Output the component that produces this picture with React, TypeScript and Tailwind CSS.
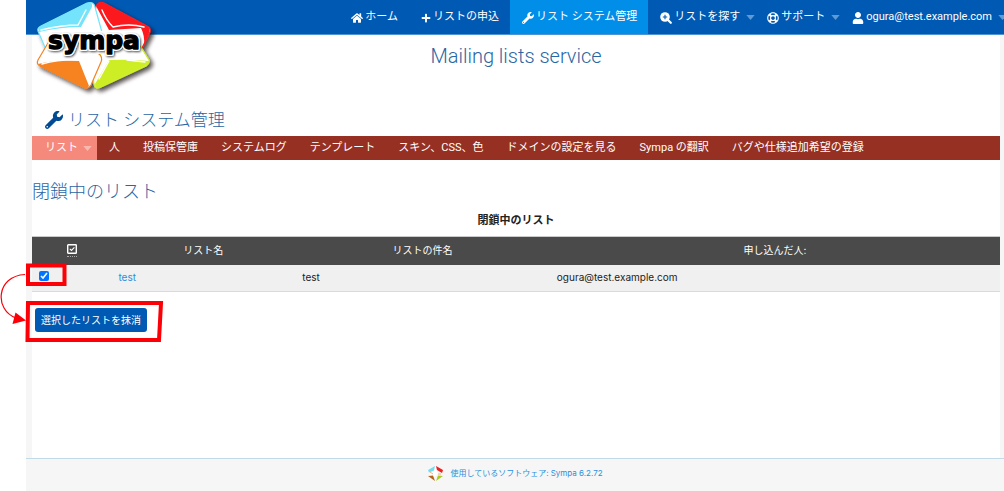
import type { ReactNode } from "react";
import { FaHome, FaPlus, FaWrench, FaRegLifeRing, FaUser } from "react-icons/fa";

const jp = "font-['Roboto','Noto_Sans_CJK_JP',sans-serif]";
const inter = "font-['Inter','Noto_Sans_CJK_JP',sans-serif]";
const heading = "font-['Roboto','Noto_Sans_CJK_JP',sans-serif] font-light text-[#2a66a4]";

function Caret({ className }: { className: string }) {
  return (
    <svg viewBox="0 0 10 6" className={`h-[5px] w-[9px] shrink-0 ${className}`} aria-hidden="true">
      <path d="M0 0h10L5 6z" fill="currentColor" />
    </svg>
  );
}

function ZoomIcon() {
  return (
    <svg viewBox="0 0 12 12" className="size-3" aria-hidden="true">
      <circle cx="5" cy="5" r="4.8" fill="#fff" />
      <path d="M8 8L10.800 10.800" stroke="#fff" strokeWidth="2.2" strokeLinecap="round" />
      <path d="M5 2.800V7.200M2.800 5H7.200" stroke="#0059b2" strokeWidth="1.1" />
    </svg>
  );
}

function Logo() {
  const word = "font-['DejaVu_Sans',sans-serif] text-[25px] font-bold";
  return (
    <svg viewBox="0 0 126 98" className="h-[98px] w-[126px]" role="img" aria-label="sympa">
      <defs>
        <filter id="shadow" x="-10%" y="-10%" width="130%" height="130%">
          <feDropShadow dx="3" dy="3" stdDeviation="2" floodColor="#1a0a14" floodOpacity="0.75" />
        </filter>
        <filter id="wordShadow" x="-10%" y="-20%" width="120%" height="150%">
          <feDropShadow dx="1" dy="1" stdDeviation="0.8" floodColor="#000" floodOpacity="0.7" />
        </filter>
      </defs>
      <g filter="url(#shadow)" fill="#fff" strokeWidth="1.2" strokeLinejoin="round">
        <path d="M64 6Q67 1 72 3L115 26Q119 28 118 32L110 48L68 56L60 30Z" stroke="#fb1b20" />
        <path d="M66 56L84 40L107 44L117 60Q118 63 114 66L69 87Q63 90 62 84L61 76Z" stroke="#cdee24" />
        <path d="M55 3Q62 1 63 7L71 36L66 52L15 52L6 31Q5 28 9 26Z" stroke="#73e4fb" />
        <path d="M16 43L54 46L67 54Q71 57 69 62L59 85Q56 90 51 87L8 66Q4 64 6 60Z" stroke="#f68220" />
      </g>
      <path d="M16 36L62 30L110 36L107 52L66 54L18 52Z" fill="#fff" />
      <path d="M7 31Q5 28 9 26L55 3Q61 1 60 7L49 27Q29 27 7 32Z" fill="#73e4fb" />
      <path d="M64 6Q67 1 72 3L115 26Q119 29 117 33L112 45Q113 36 109 28L77 30Z" fill="#fc191e" />
      <path d="M6 64Q25 59 47 61L57 86Q55 90 50 87L9 67Z" fill="#f68220" />
      <path d="M117 61Q118 64 113 66L69 87Q63 90 63 84L77 60Q98 59 117 61Z" fill="#cdee24" />
      <g stroke="#fff" strokeWidth="1.4" strokeLinecap="round" fill="none">
        <path d="M9 30Q30 25 46 25L54 10" />
        <path d="M70 10Q74 20 81 27Q97 23 112 27" />
        <path d="M10 64Q28 59 48 60" />
        <path d="M67 79L77 61M95 60L113 62" />
      </g>
      <g filter="url(#wordShadow)">
        <text x="62" y="49" textAnchor="middle" className={word} fill="#fff" stroke="#fff" strokeWidth="4" strokeLinejoin="round">
          sympa
        </text>
      </g>
      <text x="62" y="49" textAnchor="middle" className={word} fill="#000" stroke="#000" strokeWidth="1.4" strokeLinejoin="round" aria-hidden="true">
        sympa
      </text>
    </svg>
  );
}

function SmallLogo() {
  return (
    <svg viewBox="0 0 17 17" className="size-[17px]" aria-hidden="true">
      <path d="M1 5L8 1L9 5L11 8.500L8 12L2 11L3 8Z" fill="#fff" />
      <path d="M1 5L8 1L7 5.500L2 7.500Z" fill="#73dcf0" />
      <path d="M9 1L16 5L15 8L10 5Z" fill="#ee2020" />
      <path d="M1 11L6 10.500L8 16Z" fill="#b5651d" />
      <path d="M16 11L11 10.500L9 16Z" fill="#a8cc20" />
      <path d="M3 7L6 9M14 9L11 9" stroke="#f0a060" strokeWidth="0.8" />
    </svg>
  );
}

function TopItem({ icon, children, caret, active }: { icon: ReactNode; children: ReactNode; caret?: boolean; active?: boolean }) {
  return (
    <li>
      <a
        href="#"
        className={`flex h-[34px] items-center pt-px pl-3 whitespace-nowrap ${caret ? "pr-0" : "pr-[11px]"} ${active ? "bg-[#008ee9]" : ""}`}
      >
        <span className="mr-[2px] text-[12px]">{icon}</span>
        {children}
        {caret && <Caret className="ml-[6px] text-[#5d9bd6]" />}
      </a>
    </li>
  );
}

const adminItems = [
  "人",
  "投稿保管庫",
  "システムログ",
  "テンプレート",
  "スキン、CSS、色",
  "ドメインの設定を見る",
  "Sympa の翻訳",
  "バグや仕様追加希望の登録",
];

export default function App() {
  return (
    <div lang="ja" className="relative min-h-screen overflow-hidden bg-white pl-[26px]">
      <div className={`flex min-h-screen flex-col bg-[#f6f6f6] ${jp}`}>
        <header className="relative border-b border-[#4f94d4] bg-[#0059b2]">
          <a href="#" className="absolute top-0 left-[6px] z-10">
            <Logo />
          </a>
          <ul className="-mr-[3px] flex justify-end text-[11px] text-white">
            <TopItem icon={<FaHome />}>ホーム</TopItem>
            <TopItem icon={<FaPlus className="size-[10px]" />}>リストの申込</TopItem>
            <TopItem icon={<FaWrench />} active>リスト システム管理</TopItem>
            <TopItem icon={<ZoomIcon />} caret>リストを探す</TopItem>
            <TopItem icon={<FaRegLifeRing />} caret>サポート</TopItem>
            <TopItem icon={<FaUser />} caret>ogura@test.example.com</TopItem>
          </ul>
        </header>

        <main className="mr-1 ml-[6px] flex-1 bg-white">
          <h1 className={`pt-[6px] text-center text-[20px] leading-[30px] ${heading}`}>Mailing lists service</h1>
          <h2 className={`mt-[36px] flex items-center gap-[5px] pl-[13px] text-[17px] leading-[26px] ${heading}`}>
            <FaWrench className="size-[18px] text-[#004b94]" />
            リスト システム管理
          </h2>
          <nav className="mt-[3px] bg-[#963023] text-[11px] text-white">
            <ul className="flex flex-wrap">
              <li>
                <a href="#" className="flex h-6 items-center bg-[#f58a7c] pt-px pr-[5px] pl-[13px]">
                  リスト
                  <Caret className="ml-[5px] text-[#f9b9b0]" />
                </a>
              </li>
              {adminItems.map((label) => (
                <li key={label}>
                  <a href="#" className="flex h-6 items-center pt-px pr-[11px] pl-3 whitespace-nowrap">{label}</a>
                </li>
              ))}
            </ul>
          </nav>

          <h3 className={`mt-[19px] text-[18px] leading-[26px] ${heading}`}>閉鎖中のリスト</h3>

          <table className={`w-full table-fixed border-collapse text-[10px] text-[#222] ${inter}`}>
            <caption className="pt-[7px] pb-[7px] text-center text-[11px] leading-[17px] font-bold">閉鎖中のリスト</caption>
            <colgroup>
              <col className="w-[8.2%]" />
              <col className="w-[19%]" />
              <col className="w-[26.3%]" />
              <col className="w-[46.5%]" />
            </colgroup>
            <thead>
              <tr className="h-7 border-t border-[#cacaca] bg-[#4a4a4a] text-white">
                <th className="font-normal">
                  <button type="button" aria-label="すべて選択" className="mx-auto block border-b border-dotted border-[#aaa] pb-[2px]">
                    <svg viewBox="0 0 10 10" className="size-[10px]" fill="none" stroke="#fff" strokeWidth="1.4" aria-hidden="true">
                      <rect x="0.7" y="0.7" width="8.6" height="8.6" rx="0.6" />
                      <path d="M2.8 4.8L4.5 6.4L7.4 3.4" strokeWidth="1.1" />
                    </svg>
                  </button>
                </th>
                <th className="font-normal">リスト名</th>
                <th className="font-normal">リストの件名</th>
                <th className="font-normal">申し込んだ人:</th>
              </tr>
            </thead>
            <tbody>
              <tr className="h-[27px] border-b border-[#dadada] bg-[#f0f0f0]">
                <td className="pb-1 pl-[7px]">
                  <input type="checkbox" defaultChecked aria-label="test" className="block size-[10px] accent-[#0075ff]" />
                </td>
                <td className="pl-[7px]">
                  <a href="#" className="text-[#2a8fdc]">test</a>
                </td>
                <td className="pl-[7px]">test</td>
                <td className="pl-[7px]">ogura@test.example.com</td>
              </tr>
            </tbody>
          </table>

          <button type="button" className={`mt-4 ml-[3px] h-6 rounded-[3px] bg-[#0059b2] px-[6px] text-[10px] text-white ${inter}`}>
            選択したリストを抹消
          </button>
        </main>

        <footer className={`flex h-[33px] items-center justify-center gap-[6px] border-t border-[#c2d9e8] pb-1 text-[8px] text-[#2a8fdc] ${inter}`}>
          <SmallLogo />
          <a href="#">使用しているソフトウェア: Sympa 6.2.72</a>
        </footer>
      </div>

      <svg viewBox="0 0 170 350" className="pointer-events-none absolute top-0 left-0 h-[350px] w-[170px]" fill="none" stroke="#fb0007" aria-hidden="true">
        <rect x="28" y="265.5" width="36.5" height="18.5" strokeWidth="4" />
        <path d="M28 303L161 303L159 340L27.500 340Z" strokeWidth="4" />
        <path d="M25 274.500C-4 276 -6 310 16 318" strokeWidth="1.2" />
        <path d="M15.500 312.500L26 320.500L12.500 324Z" fill="#fb0007" stroke="none" />
      </svg>
    </div>
  );
}
